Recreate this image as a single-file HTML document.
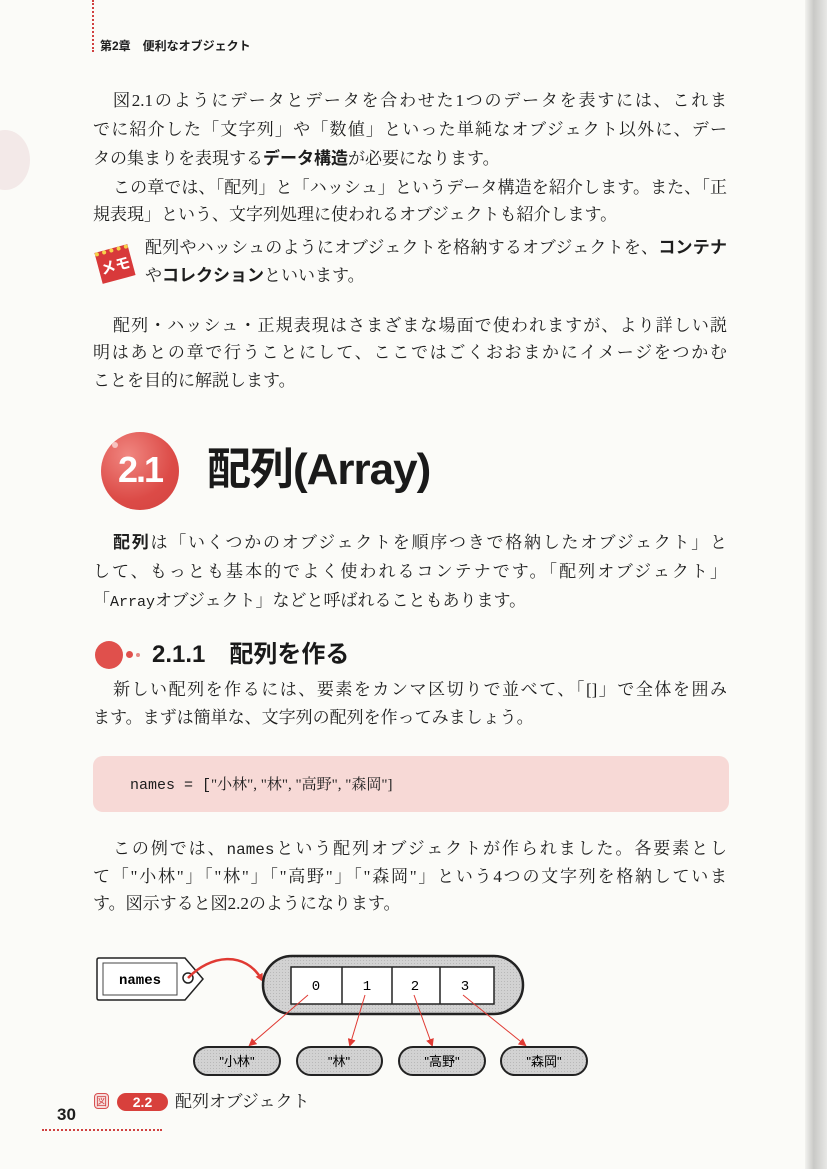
<!DOCTYPE html>
<html><head><meta charset="utf-8"><style>
*{margin:0;padding:0;box-sizing:border-box}
body{width:827px;height:1169px;background:#fbfbf8;position:relative;overflow:hidden;font-family:"Liberation Serif","Noto Serif CJK JP","Noto Serif CJK SC",serif;color:#1e1e1e}
.l{position:absolute;left:93px;width:634px;font-size:17px;line-height:24px;height:24px;white-space:nowrap;text-align:justify;text-align-last:justify}
.i{left:113px;width:614px}
.n{text-align-last:left}
.b{font-family:"Liberation Sans","Noto Sans CJK JP",sans-serif;font-weight:bold}
.m{font-family:"Liberation Mono",monospace;font-size:15px}
.abs{position:absolute}
</style></head><body>
<div class="abs" style="right:0;top:0;width:22px;height:1169px;background:linear-gradient(90deg,#f2f2ef,#c9c9c6 40%,#e8e8e6)"></div>
<div class="abs" style="left:-20px;top:130px;width:50px;height:60px;border-radius:50%;background:#f3e9e8"></div>
<div class="abs" style="left:92px;top:0;height:52px;border-left:2px dotted #d04040"></div>
<div class="abs b" style="left:100px;top:37px;font-size:12px">第2章　便利なオブジェクト</div>

<div class="l i" style="top:89px">図2.1のようにデータとデータを合わせた1つのデータを表すには、これま</div>
<div class="l" style="top:118px">でに紹介した「文字列」や「数値」といった単純なオブジェクト以外に、デー</div>
<div class="l n" style="top:147px">タの集まりを表現する<span class="b">データ構造</span>が必要になります。</div>
<div class="l i" style="top:176px">この章では、「配列」と「ハッシュ」というデータ構造を紹介します。また、「正</div>
<div class="l n" style="top:203px">規表現」という、文字列処理に使われるオブジェクトも紹介します。</div>

<div class="abs" style="left:98px;top:248px;width:34px;height:32px;background:#d8393a;transform:rotate(-15deg);color:#fff;font:bold 15px 'Liberation Sans','Noto Sans CJK JP',sans-serif;text-align:center;line-height:30px;border-top:4px dotted #f6d24a">メモ</div>
<div class="l" style="left:145px;width:582px;top:236px">配列やハッシュのようにオブジェクトを格納するオブジェクトを、<span class="b">コンテナ</span></div>
<div class="l n" style="left:145px;width:582px;top:264px">や<span class="b">コレクション</span>といいます。</div>

<div class="l i" style="top:314px">配列・ハッシュ・正規表現はさまざまな場面で使われますが、より詳しい説</div>
<div class="l" style="top:341px">明はあとの章で行うことにして、ここではごくおおまかにイメージをつかむ</div>
<div class="l n" style="top:369px">ことを目的に解説します。</div>

<div class="abs" style="left:101px;top:432px;width:78px;height:78px;border-radius:50%;background:radial-gradient(circle at 35% 30%,#f08680,#dc4b47 60%,#d2423f)"></div>
<div class="abs" style="left:112px;top:442px;width:6px;height:6px;border-radius:50%;background:#f7c3c0"></div>
<div class="abs b" style="left:101px;top:446px;width:78px;text-align:center;color:#fff;font-size:36px;line-height:48px;letter-spacing:-2px">2.1</div>
<div class="abs b" style="left:207px;top:444px;font-size:44px;line-height:52px;color:#1a1a1a;letter-spacing:-1px">配列(Array)</div>

<div class="l i" style="top:531px"><span class="b">配列</span>は「いくつかのオブジェクトを順序つきで格納したオブジェクト」と</div>
<div class="l" style="top:560px">して、もっとも基本的でよく使われるコンテナです。「配列オブジェクト」</div>
<div class="l n" style="top:589px">「<span class="m">Array</span>オブジェクト」などと呼ばれることもあります。</div>

<div class="abs" style="left:95px;top:641px;width:28px;height:28px;border-radius:50%;background:#e0504c"></div>
<div class="abs" style="left:126px;top:651px;width:7px;height:7px;border-radius:50%;background:#e0504c"></div>
<div class="abs" style="left:136px;top:653px;width:4px;height:4px;border-radius:50%;background:#e58a86"></div>
<div class="abs b" style="left:152px;top:640px;font-size:24px;line-height:30px;color:#1a1a1a">2.1.1　配列を作る</div>

<div class="l i" style="top:678px">新しい配列を作るには、要素をカンマ区切りで並べて、「[]」で全体を囲み</div>
<div class="l n" style="top:706px">ます。まずは簡単な、文字列の配列を作ってみましょう。</div>

<div class="abs" style="left:93px;top:756px;width:636px;height:56px;border-radius:10px;background:#f7d9d6"></div>
<div class="abs" style="left:130px;top:773px;font-size:15px;line-height:24px;white-space:pre"><span class="m">names = [</span>"小林", "林", "高野", "森岡"]</div>

<div class="l i" style="top:837px">この例では、<span class="m" style="font-size:16px">names</span>という配列オブジェクトが作られました。各要素とし</div>
<div class="l" style="top:865px">て「"小林"」「"林"」「"高野"」「"森岡"」という4つの文字列を格納していま</div>
<div class="l n" style="top:892px">す。図示すると図2.2のようになります。</div>

<svg class="abs" style="left:0;top:0" width="827" height="1169">
<defs><pattern id="g" width="3" height="3" patternUnits="userSpaceOnUse"><rect width="3" height="3" fill="#d2d2d2"/><rect width="1" height="1" fill="#b8b8b8"/></pattern>
<marker id="a" markerWidth="8" markerHeight="8" refX="6" refY="4" orient="auto" markerUnits="userSpaceOnUse"><path d="M0,0 L8,4 L0,8 Z" fill="#e03a33"/></marker></defs>
<path d="M99,958 H185 L203,979 L185,1000 H99 Q97,1000 97,998 V960 Q97,958 99,958Z" fill="#fff" stroke="#222" stroke-width="1.5"/>
<rect x="103" y="963" width="74" height="32" fill="none" stroke="#444"/>
<text x="140" y="984" text-anchor="middle" font-family="Liberation Mono" font-weight="bold" font-size="14">names</text>
<circle cx="188" cy="978" r="5" fill="none" stroke="#222" stroke-width="1.5"/>
<path d="M188,978 C210,955 245,950 262,980" fill="none" stroke="#e03a33" stroke-width="2.5" marker-end="url(#a)"/>
<rect x="263" y="956" width="260" height="58" rx="29" fill="url(#g)" stroke="#222" stroke-width="2.5"/>
<rect x="291" y="967" width="203" height="37" fill="#fff" stroke="#222" stroke-width="1.5"/>
<path d="M342,967V1004M392,967V1004M440,967V1004" stroke="#222" stroke-width="1.5"/>
<g font-family="Liberation Mono" font-size="14" text-anchor="middle"><text x="316" y="990">0</text><text x="367" y="990">1</text><text x="415" y="990">2</text><text x="465" y="990">3</text></g>
<g stroke="#e03a33" stroke-width="1" marker-end="url(#a)"><path d="M308,995 L250,1045"/><path d="M365,995 L350,1045"/><path d="M414,995 L432,1045"/><path d="M463,995 L525,1045"/></g>
<g fill="url(#g)" stroke="#222" stroke-width="2"><rect x="194" y="1047" width="86" height="28" rx="14"/><rect x="297" y="1047" width="85" height="28" rx="14"/><rect x="399" y="1047" width="86" height="28" rx="14"/><rect x="501" y="1047" width="86" height="28" rx="14"/></g>
<g font-family="Liberation Sans,Noto Sans CJK JP,sans-serif" font-size="13" text-anchor="middle"><text x="237" y="1066">"小林"</text><text x="339" y="1066">"林"</text><text x="442" y="1066">"高野"</text><text x="544" y="1066">"森岡"</text></g>
</svg>

<div class="abs" style="left:94px;top:1093px;width:15px;height:16px;border:1px solid #d85050;border-radius:4px;color:#d04545;font:11px/14px 'Noto Sans CJK JP',sans-serif;text-align:center;background:#f6dcdc">図</div>
<div class="abs b" style="left:117px;top:1093px;width:51px;height:18px;border-radius:9px;background:#d8403c;color:#fff;font-size:14px;line-height:18px;text-align:center">2.2</div>
<div class="abs" style="left:175px;top:1090px;font-size:17px;line-height:24px">配列オブジェクト</div>
<div class="abs b" style="left:57px;top:1105px;font-size:17px;line-height:20px">30</div>
<div class="abs" style="left:42px;top:1129px;width:120px;border-top:2px dotted #d04040"></div>
</body></html>
